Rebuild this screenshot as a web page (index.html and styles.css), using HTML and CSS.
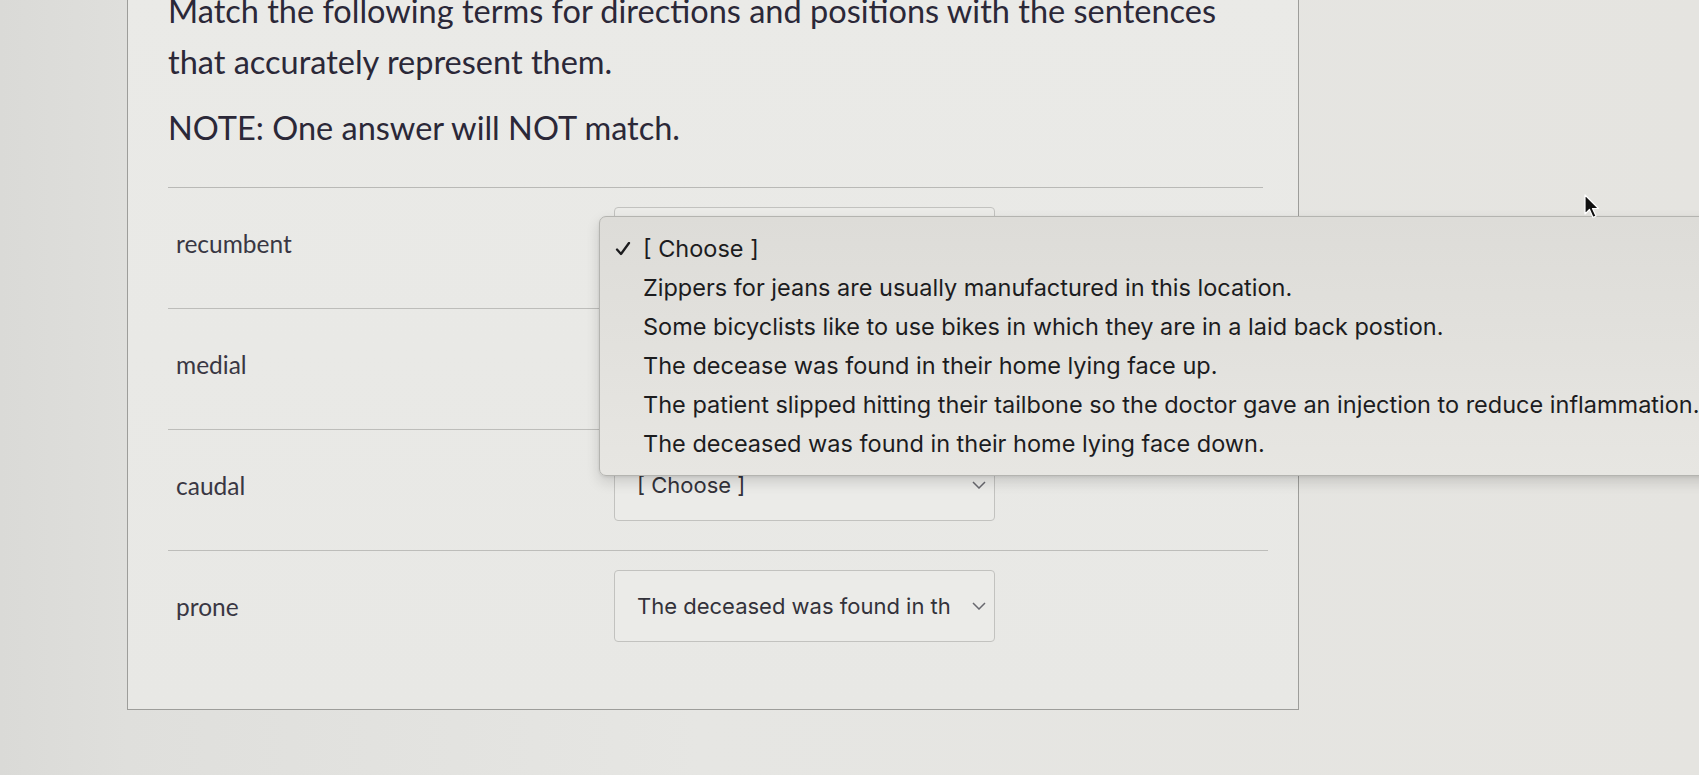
FILE: index.html
```html
<!DOCTYPE html>
<html lang="en">
<head>
<meta charset="utf-8">
<title>Matching question</title>
<link rel="stylesheet" href="styles.css">
</head>
<body>
<div class="page">
  <div class="card">
    <div class="question">
      <p class="title">Match the following terms for directions and positions with the sentences<br>that accurately represent them.</p>
      <p class="note">NOTE: One answer will NOT match.</p>
    </div>
    <div class="rows">
      <div class="row">
        <div class="label">recumbent</div>
        <div class="select-wrap">
          <div class="select"><span class="value">[ Choose ]</span><svg class="chev" viewBox="0 0 14 8"><path d="M1 1l6 6 6-6"/></svg></div>
          <ul class="menu">
            <li class="item checked"><svg class="check" viewBox="0 0 16 14"><path d="M2 7.5l4 4.5 8-11"/></svg>[ Choose ]</li>
            <li class="item">Zippers for jeans are usually manufactured in this location.</li>
            <li class="item">Some bicyclists like to use bikes in which they are in a laid back postion.</li>
            <li class="item">The decease was found in their home lying face up.</li>
            <li class="item">The patient slipped hitting their tailbone so the doctor gave an injection to reduce inflammation.</li>
            <li class="item">The deceased was found in their home lying face down.</li>
          </ul>
        </div>
      </div>
      <div class="row">
        <div class="label">medial</div>
        <div class="select-wrap">
          <div class="select"><span class="value">[ Choose ]</span><svg class="chev" viewBox="0 0 14 8"><path d="M1 1l6 6 6-6"/></svg></div>
        </div>
      </div>
      <div class="row">
        <div class="label">caudal</div>
        <div class="select-wrap">
          <div class="select"><span class="value">[ Choose ]</span><svg class="chev" viewBox="0 0 14 8"><path d="M1 1l6 6 6-6"/></svg></div>
        </div>
      </div>
      <div class="row last">
        <div class="label">prone</div>
        <div class="select-wrap">
          <div class="select"><span class="value">The deceased was found in th</span><svg class="chev" viewBox="0 0 14 8"><path d="M1 1l6 6 6-6"/></svg></div>
        </div>
      </div>
    </div>
  </div>
</div>
<svg class="cursor" viewBox="0 0 16 26" width="16" height="26"><path d="M1 1 L1 20 L5.5 15.5 L9 23.5 L12 22 L8.5 14.5 L14.5 14.5 Z" fill="#111" stroke="#fff" stroke-width="1.2" stroke-linejoin="round"/></svg>
</body>
</html>
```
FILE: styles.css
```css
html, body {
  margin: 0;
  padding: 0;
}
body {
  width: 1699px;
  height: 775px;
  overflow: hidden;
  background: linear-gradient(90deg, #dadad7 0px, #dfdfdc 127px, #e6e6e3 700px, #e5e4e0 1699px);
  font-family: Lato, "Open Sans", sans-serif;
  position: relative;
}
.page {
  padding-left: 127px;
}
.card {
  width: 1172px;
  margin-top: -15px;
  background: linear-gradient(180deg, #eaeae7 0%, #e8e8e5 100%);
  border: 1px solid #9d9d9a;
  border-top: none;
  padding: 0 0 38px 40px;
  box-sizing: border-box;
}
.question {
  width: 1095px;
  border-bottom: 1px solid #b9b9b6;
  padding-bottom: 34px;
}
.title {
  margin: 0;
  font-size: 32.5px;
  line-height: 51px;
  color: #2b2838;
}
.note {
  margin: 15px 0 0;
  font-size: 32.5px;
  line-height: 51px;
  color: #2b2838;
}
.rows {
  width: 1100px;
}
.row {
  display: flex;
  align-items: center;
  padding: 19px 0 29px;
  border-bottom: 1px solid #bdbdba;
}
.row.last {
  border-bottom: none;
}
.label {
  width: 438px;
  padding-left: 8px;
  font-size: 24.5px;
  color: #393743;
}
.select-wrap {
  position: relative;
}
.select {
  width: 381px;
  height: 72px;
  box-sizing: border-box;
  border: 1px solid #c2c2bf;
  border-radius: 4px;
  background: #ebebe8;
  display: flex;
  align-items: center;
  padding: 0 8px 0 22px;
  font-family: Inter, "Noto Sans", sans-serif;
  font-size: 22px;
  color: #33323a;
}
.value {
  flex: 1;
  white-space: nowrap;
  overflow: hidden;
}
.chev {
  width: 14px;
  height: 8px;
  fill: none;
  stroke: #68686e;
  stroke-width: 1.5;
}
.menu {
  position: absolute;
  top: 9px;
  left: -15px;
  width: 1130px;
  margin: 0;
  padding: 12px 0;
  list-style: none;
  background: linear-gradient(180deg, #dddcd8 0%, #e3e2de 60%, #e7e6e2 100%);
  border: 1px solid #b4b4b0;
  border-radius: 7px;
  box-shadow: 0 6px 14px rgba(0, 0, 0, 0.14), 0 1px 3px rgba(0, 0, 0, 0.08);
  font-family: Inter, "Noto Sans", sans-serif;
  font-size: 23.5px;
  color: #1c1c1e;
  z-index: 5;
}
.item {
  height: 39px;
  line-height: 39px;
  padding-left: 43px;
  white-space: nowrap;
  position: relative;
}
.check {
  position: absolute;
  left: 15px;
  top: 13px;
  width: 16px;
  height: 14px;
  fill: none;
  stroke: #1c1c1e;
  stroke-width: 2.3;
  stroke-linecap: round;
  stroke-linejoin: round;
}
.cursor {
  position: absolute;
  left: 1584px;
  top: 194px;
  z-index: 10;
}
```
